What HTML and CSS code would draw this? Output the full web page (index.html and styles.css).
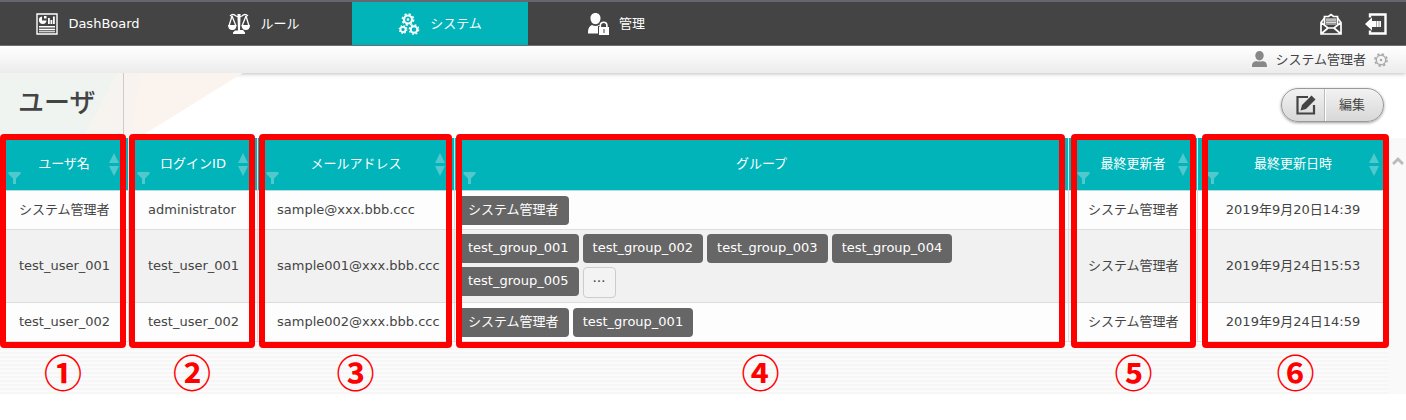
FILE: index.html
```html
<!DOCTYPE html>
<html lang="ja">
<head>
<meta charset="utf-8">
<title>ユーザ</title>
<link rel="stylesheet" href="styles.css">
</head>
<body>
<svg class="defs" aria-hidden="true">
  <symbol id="funnel" viewBox="0 0 12 12"><path d="M0 0h12v2L7.500 6.500V12h-3V6.500L0 2z"/></symbol>
  <symbol id="sort" viewBox="0 0 10 23"><path d="M5 0l5 10H0zM0 13h10L5 23z"/></symbol>
</svg>
<header class="topbar">
  <nav class="nav">
    <a class="nav-item" href="#">
      <svg class="icon" viewBox="0 0 22 22"><path fill="none" stroke="#fff" stroke-width="1.400" d="M1 1h20v20H1z"/><path fill="#fff" d="M6 3.500V7.500h4.500a3.800 3.800 0 1 1-4.500-4zM12 5h1.800v6H12zM14.500 7h1.800v4h-1.800zM17 3.500h1.800V11H17zM3 13h16v1.500H3zM3 15.800h16v1.400H3zM3 18.300h16v1H3z"/><path fill="#fff" d="M8 3h2.500v2.500H8z"/></svg>
      <span>DashBoard</span>
    </a>
    <a class="nav-item" href="#">
      <svg class="icon" viewBox="0 0 22 22"><g fill="none" stroke="#fff" stroke-width="1.300"><path d="M2 3q3-3 6 0 3 1.500 6 0 3-3 6 0"/><path d="M4 3L1 13M4 3l4 10M18 3l-4 10M18 3l3 10"/></g><path fill="#fff" d="M9.500 1h3v4l-.5 12h3l2 2.500v1.500H5v-1.500L7 17.500h3L9.500 5zM0 12h8.500q0 5-4.200 5T0 12zM13.500 12H22q0 5-4.200 5t-4.300-5z"/></svg>
      <span>ルール</span>
    </a>
    <a class="nav-item nav-item-active" href="#">
      <svg class="icon" viewBox="0 0 22 22"><g fill="none" stroke="#fff"><circle cx="10" cy="6.500" r="4" stroke-width="2.200"/><circle cx="10" cy="6.500" r="5.600" stroke-width="1.600" stroke-dasharray="2.200"/><circle cx="5" cy="16.500" r="2.600" stroke-width="1.800"/><circle cx="5" cy="16.500" r="3.800" stroke-width="1.200" stroke-dasharray="1.500"/><circle cx="16" cy="16.500" r="3.300" stroke-width="2"/><circle cx="16" cy="16.500" r="4.700" stroke-width="1.400" stroke-dasharray="1.850"/></g><circle cx="10" cy="6.500" r="1.300" fill="#fff"/></svg>
      <span>システム</span>
    </a>
    <a class="nav-item" href="#">
      <svg class="icon" viewBox="0 0 22 22"><path fill="#fff" d="M8.500 0c3 0 5 2.200 5 5.200s-2 6-5 6-5-3-5-6 2-5.200 5-5.200zM1 20.500c0-5 1-7 4-8.500q3.500 2 7 0l1 .7-1.500 2V20.500z"/><path fill="#444" d="M11 13h11v9H11z"/><path fill="none" stroke="#fff" stroke-width="1.600" d="M13.300 14.500v-2a3.300 3.300 0 0 1 6.600 0v2"/><path fill="#fff" d="M12 14h10v8H12z"/><path fill="#777" d="M16.300 16h1.400v4h-1.400z"/></svg>
      <span>管理</span>
    </a>
  </nav>
  <div class="tools">
    <button class="tool" aria-label="メール"><svg class="icon" viewBox="0 0 22 22"><g fill="none" stroke="#fff" stroke-width="1.700"><path d="M4.500 5L1 9.500V21h20V9.500L17.500 5M1 9.500l7 5.500h6l7-5.500M1 21l7-6M21 21l-7-6"/><path d="M4.500 11.500V3.500h4L11 1.500l2.500 2h4v8"/></g><path fill="#999" d="M6 5h10v7H6z"/><path fill="#ddd" d="M6 6.500h10v1H6zM6 9h10v1H6z"/></svg></button>
    <button class="tool" aria-label="ログアウト"><svg class="icon" viewBox="0 0 22 22"><path fill="none" stroke="#fff" stroke-width="2.400" d="M5 4.500V1.500h15.500v19H5v-3"/><path fill="#fff" d="M0 11l7-6.500V8h9v6H7v3.500z"/><path fill="#aaa" d="M11 8h1v6h-1zM13.500 8h1v6h-1z"/></svg></button>
  </div>
</header>
<div class="userbar">
  <svg class="user-icon" viewBox="0 0 16 18"><path fill="#888" d="M8 0c2.600 0 4.500 2 4.500 4.800S10.500 10 8 10 3.500 7.600 3.500 4.800 5.400 0 8 0zM0 17c0-4 .8-5.500 4.500-6.500q3.500 1.500 7 0C15.200 11.500 16 13 16 17z"/></svg>
  <span>システム管理者</span>
  <button class="gear" aria-label="設定"><svg class="gear-icon" viewBox="0 0 14 14"><g fill="none" stroke="#aaa"><circle cx="7" cy="7" r="4.700" stroke-width="1.400"/><circle cx="7" cy="7" r="6.100" stroke-width="1.600" stroke-dasharray="2.400"/></g><circle cx="7" cy="7" r="1.300" fill="#aaa"/></svg></button>
</div>
<main>
  <div class="titlebar">
    <svg class="pattern" viewBox="0 0 260 65" aria-hidden="true"><path fill="#eff4f1" d="M0 0h118L84 65H0z"/><path fill="#f7f3ef" d="M118 0h6v65H84z"/><path fill="#fbf4ee" d="M124 0h119L138 65h-14z"/><path fill="#f9f3ef" d="M124 0h18l-12 65h-6z"/><path fill="#ccc" d="M123 0h1v65h-1z"/></svg>
    <h1 class="title">ユーザ</h1>
    <button class="edit">
      <span class="edit-mark"><svg class="edit-icon" viewBox="0 0 20 20"><path fill="none" stroke="#444" stroke-width="2.200" d="M12 2H1.500v16.500H18V10"/><path fill="#444" d="M4.500 15.500l1.500-5.500L15.500.5l4 4L10 14z"/></svg></span>
      <span class="edit-label">編集</span>
    </button>
  </div>
  <div class="list">
    <div class="list-main">
      <table class="users">
        <thead>
          <tr>
            <th class="col-s"><div class="head"><svg class="funnel"><use href="#funnel"/></svg><span>ユーザ名</span><svg class="sort"><use href="#sort"/></svg></div></th>
            <th class="col-s"><div class="head"><svg class="funnel"><use href="#funnel"/></svg><span>ログインID</span><svg class="sort"><use href="#sort"/></svg></div></th>
            <th class="col-m"><div class="head"><svg class="funnel"><use href="#funnel"/></svg><span>メールアドレス</span><svg class="sort"><use href="#sort"/></svg></div></th>
            <th><div class="head"><svg class="funnel"><use href="#funnel"/></svg><span>グループ</span></div></th>
            <th class="col-s"><div class="head"><svg class="funnel"><use href="#funnel"/></svg><span>最終更新者</span><svg class="sort"><use href="#sort"/></svg></div></th>
            <th class="col-l"><div class="head"><svg class="funnel"><use href="#funnel"/></svg><span>最終更新日時</span><svg class="sort"><use href="#sort"/></svg></div></th>
          </tr>
        </thead>
        <tbody>
          <tr><td>システム管理者</td><td>administrator</td><td>sample@xxx.bbb.ccc</td><td class="groups"><div class="chips"><span class="chip">システム管理者</span></div></td><td>システム管理者</td><td class="date">2019年9月20日14:39</td></tr>
          <tr><td>test_user_001</td><td>test_user_001</td><td>sample001@xxx.bbb.ccc</td><td class="groups"><div class="chips"><span class="chip">test_group_001</span><span class="chip">test_group_002</span><span class="chip">test_group_003</span><span class="chip">test_group_004</span><span class="chip">test_group_005</span><button class="more">…</button></div></td><td>システム管理者</td><td class="date">2019年9月24日15:53</td></tr>
          <tr><td>test_user_002</td><td>test_user_002</td><td>sample002@xxx.bbb.ccc</td><td class="groups"><div class="chips"><span class="chip">システム管理者</span><span class="chip">test_group_001</span></div></td><td>システム管理者</td><td class="date">2019年9月24日14:59</td></tr>
        </tbody>
      </table>
      <div class="notes">
        <div class="note"><span>①</span></div>
        <div class="note"><span>②</span></div>
        <div class="note"><span>③</span></div>
        <div class="note"><span>④</span></div>
        <div class="note"><span>⑤</span></div>
        <div class="note"><span>⑥</span></div>
      </div>
    </div>
    <div class="scroll"><svg class="caret" viewBox="0 0 12 10"><path fill="none" stroke="#bbb" stroke-width="3" d="M1 8l5-5 5 5"/></svg></div>
  </div>
</main>
</body>
</html>
```
FILE: styles.css
```css
* { box-sizing: border-box; }
body {
  margin: 0;
  background: #fff;
  color: #444;
  font: 13px/20px "DejaVu Sans", "Noto Sans CJK JP", sans-serif;
}
button { margin: 0; padding: 0; border: 0; background: none; color: inherit; font: inherit; }
svg { display: block; flex: none; }
.defs { position: absolute; width: 0; height: 0; }
.topbar {
  display: flex;
  justify-content: space-between;
  height: 46px;
  border-top: 2px solid #66666e;
  border-bottom: 1px solid #777;
  background: #444;
}
.nav { display: flex; }
.nav-item {
  display: flex;
  align-items: center;
  justify-content: center;
  gap: 10px;
  width: 176px;
  color: #fff;
  text-decoration: none;
}
.nav-item-active { background: #00b4b9; }
.icon { width: 22px; height: 22px; }
.tools { display: flex; align-items: center; gap: 23px; padding-right: 19px; }
.userbar {
  position: relative;
  display: flex;
  align-items: center;
  justify-content: flex-end;
  gap: 8px;
  height: 27px;
  padding-right: 18px;
  background: linear-gradient(#fff, #ececec);
  box-shadow: 0 1px 4px rgba(0, 0, 0, .25);
}
.user-icon { width: 15px; height: 17px; }
.gear-icon { width: 14px; height: 14px; }
.titlebar {
  position: relative;
  display: flex;
  align-items: center;
  justify-content: space-between;
  height: 65px;
  padding: 0 22px 0 18px;
}
.pattern { position: absolute; left: 0; top: 0; width: 260px; height: 65px; }
.title { position: relative; margin: 0 0 6px; font-size: 26px; line-height: 36px; font-weight: 500; }
.edit {
  display: flex;
  height: 34px;
  margin-bottom: 2px;
  border: 1px solid #999;
  border-radius: 17px;
  background: linear-gradient(#f2f2f2, #d8d8d8);
  box-shadow: 0 1px 3px rgba(0, 0, 0, .4);
}
.edit-mark, .edit-label { display: flex; align-items: center; }
.edit-mark { padding: 0 8px 0 14px; border-right: 1px solid #bbb; }
.edit-icon { width: 20px; height: 20px; }
.edit-label { padding: 0 18px 0 13px; border-left: 1px solid #fff; }
.list { display: flex; }
.list-main {
  position: relative;
  flex: 1;
  padding-bottom: 52px;
  background: repeating-linear-gradient(#fbfbfb 0 2px, #f6f6f6 2px 4px);
}
.users { width: 100%; table-layout: fixed; border-collapse: separate; border-spacing: 0; }
.col-s { width: 129px; }
.col-m { width: 197px; }
.col-l { width: 191px; }
th { padding: 0; border-right: 1px solid #cce8e9; border-bottom: 1px solid #b5dcde; background: #00b4b9; color: #fff; font-weight: 400; }
.head { position: relative; display: flex; align-items: center; justify-content: center; height: 52px; }
.funnel { position: absolute; left: 8px; bottom: 6px; width: 13px; height: 12px; fill: #4fc9cd; }
.sort { position: absolute; right: 9px; top: 15px; width: 10px; height: 23px; fill: #4fc9cd; }
td { height: 39px; padding: 0 0 0 19px; border-right: 1px solid #ddd; border-bottom: 1px solid #ddd; background: #fdfdfd; white-space: nowrap; }
tr:nth-child(even) td { background: #f1f1f1; }
.groups { padding: 4px 100px 4px 3px; }
.date { padding: 0; text-align: center; }
.chips { display: flex; flex-wrap: wrap; gap: 4px; }
.chip { height: 29px; padding: 0 10px; border-radius: 4px; background: #666; color: #fff; line-height: 28px; }
.more { width: 33px; height: 31px; padding-bottom: 4px; border: 1px solid #ccc; border-radius: 4px; background: #f3f3f3; font-family: "Noto Sans CJK JP", sans-serif; }
.notes {
  position: absolute;
  inset: -4px 0 46px;
  display: grid;
  grid-template-columns: 126px 3px 126px 4px 193px 4px 1fr 6px 125px 6px 187px;
  pointer-events: none;
}
.note { position: relative; grid-row: 1; border: 6px solid #f00; border-radius: 4px; }
.note:nth-child(1) { grid-column: 1; }
.note:nth-child(2) { grid-column: 3; }
.note:nth-child(3) { grid-column: 5; }
.note:nth-child(4) { grid-column: 7; }
.note:nth-child(5) { grid-column: 9; }
.note:nth-child(6) { grid-column: 11; }
.note span {
  position: absolute;
  top: 100%;
  left: 0;
  right: 0;
  margin-top: 4px;
  color: #f00;
  font: 700 38px/50px "Noto Sans CJK JP", sans-serif;
  text-align: center;
}
.scroll { display: flex; justify-content: center; width: 17px; padding-top: 18px; background: #f9f9f9; }
.caret { width: 12px; height: 10px; }
```
